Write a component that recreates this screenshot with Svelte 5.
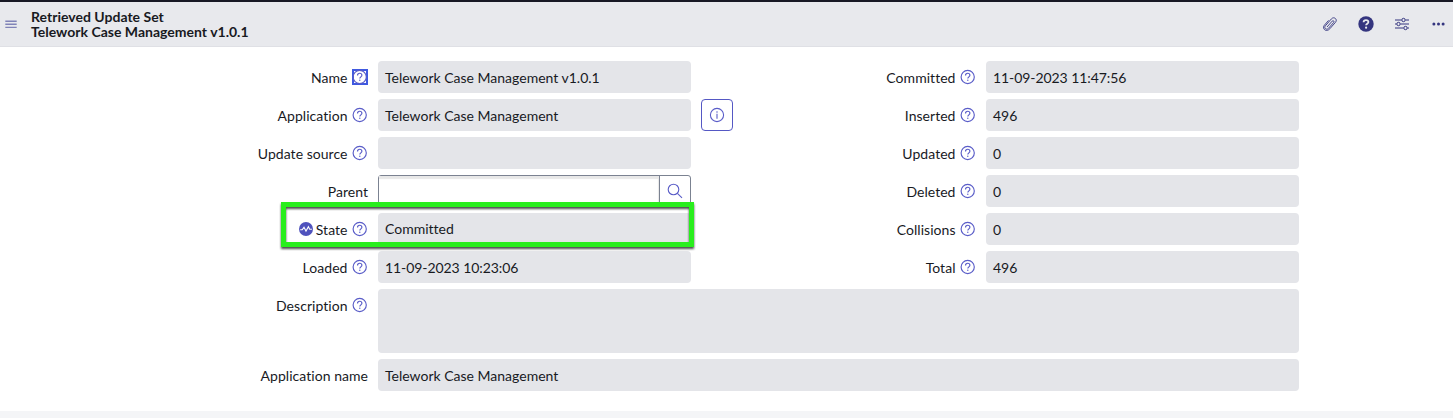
<script>
  const left = [
    { label: 'Name', value: 'Telework Case Management v1.0.1', help: true, focused: true },
    { label: 'Application', value: 'Telework Case Management', help: true, info: true },
    { label: 'Update source', value: '', help: true },
    { label: 'Parent', value: '', lookup: true },
    { label: 'State', value: 'Committed', help: true, pulse: true, marked: true },
    { label: 'Loaded', value: '11-09-2023 10:23:06', help: true, numeric: true }
  ];
  const right = [
    { label: 'Committed', value: '11-09-2023 11:47:56', help: true, numeric: true },
    { label: 'Inserted', value: '496', help: true },
    { label: 'Updated', value: '0', help: true },
    { label: 'Deleted', value: '0', help: true },
    { label: 'Collisions', value: '0', help: true },
    { label: 'Total', value: '496', help: true }
  ];
  const wide = [
    { label: 'Description', value: '', help: true, tall: true },
    { label: 'Application name', value: 'Telework Case Management' }
  ];
</script>

{#snippet row(f)}
  <div class="row" class:tall={f.tall} class:marked={f.marked}>
    <div class="label">
      {#if f.pulse}
        <svg class="pulse" width="14" height="14" viewBox="0 0 14 14">
          <circle cx="7" cy="7" r="7" fill="#4f52bd" />
          <path d="M1.2 7.7h2l1.800-2.500 2 3.800 2.400-4.300 1.300 2.500h2.200" fill="none" stroke="#fff" stroke-width="1.1" />
        </svg>
      {/if}
      <span>{f.label}</span>
      {#if f.help}
        <svg class="help" class:focused={f.focused} width="16" height="16" viewBox="0 0 16 16" fill="none">
          <circle cx="7.700" cy="8" r="6.600" stroke="#5a5dc8" stroke-width="1.150" />
          <path d="M5.500 6.400c0-1.400.9-2.200 2.200-2.200s2.200.8 2.200 2c0 1.600-2.100 1.700-2.100 3.400" stroke="#5a5dc8" stroke-width="1.150" />
          <circle cx="7.800" cy="11.300" r=".7" fill="#5a5dc8" />
        </svg>
      {/if}
    </div>
    {#if f.lookup}
      <div class="lookup">
        <div class="entry"></div>
        <div class="search">
          <svg width="16" height="16" viewBox="0 0 16 16" fill="none" stroke="#5a5dc8" stroke-width="1.1">
            <circle cx="6.500" cy="6.500" r="5.300" />
            <path d="M10.400 10.400l4.600 4.400" />
          </svg>
        </div>
      </div>
    {:else}
      <div class="field" class:numeric={f.numeric}>{f.value}</div>
    {/if}
    {#if f.info}
      <div class="info">
        <svg width="16" height="16" viewBox="0 0 16 16" fill="none" stroke="#5a5dc8">
          <circle cx="8" cy="8" r="6.600" stroke-width="1.100" />
          <path d="M8 6.700v5M8 4.300v1.400" stroke-width="1.100" />
        </svg>
      </div>
    {/if}
    {#if f.marked}<div class="marker"></div>{/if}
  </div>
{/snippet}

<main>
  <header>
    <svg class="menu" width="12" height="9" viewBox="0 0 12 9" stroke="#8083b8" stroke-width="1.4">
      <path d="M.3 1.200h11.400M.3 4.300h11.400M.3 7.400h11.400" />
    </svg>
    <h1>Retrieved Update Set<br />Telework Case Management v1.0.1</h1>
    <div class="tools">
      <svg width="16" height="16" viewBox="0 0 16 16" fill="none" stroke="#34357f" stroke-width=".9" stroke-linecap="round">
        <path d="M5.300 10.700l4.900-5.600c1-1.100 2.400.2 1.500 1.300l-5.300 6c-1.900 2.100-4.900-.4-3-2.600l6-6.900c2.600-2.900 6.500.5 4.100 3.400l-5.700 6.500c-1.900 2.200-4.600 2.100-5.700.3-.9-1.300-.7-2.700.3-3.900l3.900-4.500" />
      </svg>
      <svg width="16" height="16" viewBox="0 0 16 16" fill="none">
        <circle cx="8" cy="8" r="7.700" fill="#34357f" />
        <path d="M5.600 6.300c0-1.400 1-2.200 2.400-2.200s2.400.8 2.400 2c0 1.700-2.300 1.600-2.300 3.200" stroke="#e8e9ed" stroke-width="1.800" />
        <circle cx="8.100" cy="11.700" r="1.100" fill="#e8e9ed" />
      </svg>
      <svg width="16" height="16" viewBox="0 0 16 16" fill="none" stroke="#34357f" stroke-width="1">
        <path d="M1 4h6.500M11.500 4H15M1 8h1.500M6.500 8H15M1 12h8.500M13.500 12H15" />
        <circle cx="9.500" cy="4" r="1.700" /><circle cx="4.500" cy="8" r="1.700" /><circle cx="11.500" cy="12" r="1.700" />
      </svg>
      <svg width="16" height="16" viewBox="0 0 16 16" fill="#34357f">
        <circle cx="3.900" cy="8" r="1.500" /><circle cx="8.500" cy="8" r="1.500" /><circle cx="13.100" cy="8" r="1.500" />
      </svg>
    </div>
  </header>
  <section class="form">
    <div class="columns">
      <div class="stack">{#each left as f}{@render row(f)}{/each}</div>
      <div class="stack second">{#each right as f}{@render row(f)}{/each}</div>
    </div>
    <div class="stack wide">{#each wide as f}{@render row(f)}{/each}</div>
  </section>
  <footer></footer>
</main>

<style>
  :global(body) { background: #fff; overflow: hidden; }
  main {
    width: 1453px; height: 418px; display: flex; flex-direction: column;
    font: 14px/20px Lato, sans-serif; font-variant-ligatures: none; color: #181a1f; background: #fff;
  }
  header {
    box-sizing: border-box; height: 47px; flex: none; display: flex; align-items: center;
    padding: 0 7px 0 5px; background: #e8e9ed; border-top: 2px solid #181825;
    border-bottom: 1px solid #dfe0e5;
  }
  .menu { margin-right: 14px; }
  h1 { margin: 0; font-size: 14px; line-height: 15px; font-weight: 700; letter-spacing: .01px; }
  .tools { margin-left: auto; display: flex; gap: 20px; }
  svg { display: block; flex: none; }
  .form { flex: 1; padding-top: 14px; }
  .columns { display: flex; }
  .stack { width: 691px; display: flex; flex-direction: column; gap: 6px; }
  .second { width: 608px; }
  .wide { width: 1299px; margin-top: 6px; }
  .row { position: relative; display: flex; height: 32px; }
  .tall { height: 64px; }
  .label {
    box-sizing: border-box; width: 378px; height: 32px; flex: none; padding: 1px 10px 0 0;
    display: flex; align-items: center; justify-content: flex-end; white-space: nowrap;
    letter-spacing: .04px;
  }
  .second .label { width: 295px; }
  .help { margin: -2px 0 0 4.5px; }
  .focused { box-shadow: inset 0 0 0 2px #3f59e0; }
  .pulse { margin: -1px 3px 0 0; }
  .field {
    box-sizing: border-box; flex: 1; min-width: 0; padding: 7px 7px 0;
    border-radius: 4px; background: #e4e5e9;
  }
  .numeric { letter-spacing: -.07px; }
  .marked .field { padding-top: 6px; }
  .lookup {
    box-sizing: border-box; flex: 1; display: flex; border: 1px solid #7b8291; border-radius: 3px;
  }
  .entry { flex: 1; box-shadow: inset -1px 3px 1px #e8e8e8; }
  .search {
    box-sizing: border-box; width: 31px; border-left: 1px solid #7b8291;
    display: flex; align-items: center; justify-content: center;
  }
  .info {
    position: absolute; left: 701px; top: 0; box-sizing: border-box; width: 32px; height: 32px;
    border: 1px solid #5558c4; border-radius: 4px; display: flex; align-items: center; justify-content: center;
  }
  .marker {
    position: absolute; left: 281px; top: -11px; box-sizing: border-box; width: 413px; height: 45px;
    border: 5px solid #29ee1d; filter: drop-shadow(0 2px 1px rgba(0, 0, 0, .7)); z-index: 1;
  }
  footer { height: 7px; flex: none; background: #f4f5f7; }
</style>
